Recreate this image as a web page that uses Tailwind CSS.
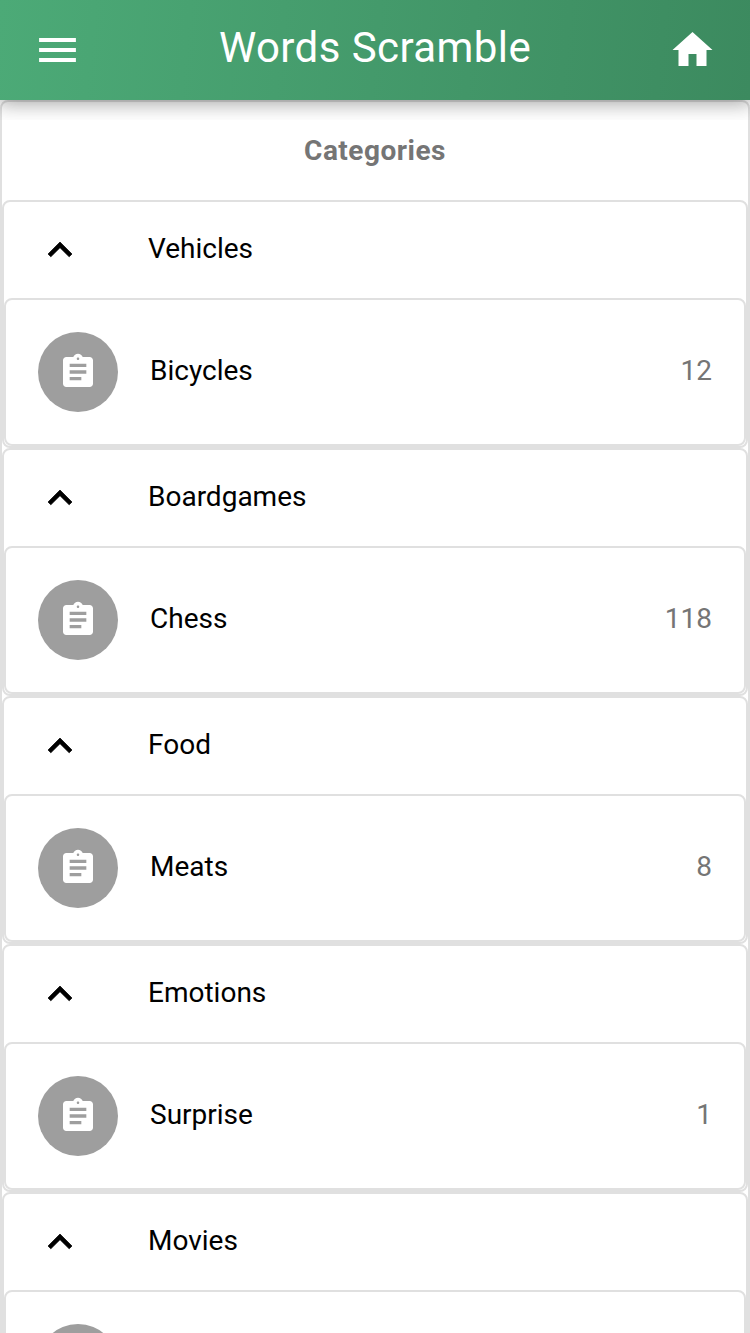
<!DOCTYPE html>
<html lang="en">
<head>
<meta charset="utf-8">
<title>Words Scramble</title>
<script src="https://cdn.jsdelivr.net/npm/@tailwindcss/browser@4"></script>
</head>
<body class="bg-white text-black text-[28px] leading-[40px] font-[Roboto,sans-serif] w-[750px] h-[1333px] overflow-hidden">
<svg class="hidden">
  <symbol id="up" viewBox="0 0 24 24"><path stroke="currentColor" stroke-width=".35" d="M12 8l-6 6 1.41 1.41L12 10.83l4.59 4.58L18 14z"/></symbol>
  <symbol id="task" viewBox="0 0 24 24"><path d="M19 3h-4.18C14.4 1.84 13.3 1 12 1s-2.4.84-2.82 2H5c-1.1 0-2 .9-2 2v14c0 1.1.9 2 2 2h14c1.1 0 2-.9 2-2V5c0-1.1-.9-2-2-2zm-7 .25c.41 0 .75.34.75.75s-.34.75-.75.75-.75-.34-.75-.75.34-.75.75-.75zM14 17H7v-2h7v2zm3-4H7v-2h10v2zm0-4H7V7h10v2z"/></symbol>
</svg>
<header class="relative z-10 h-[100px] flex items-center px-[33px] text-white bg-[linear-gradient(96deg,#4caa77,#3c8a5f)]">
  <svg class="w-[49px] h-[48px] fill-current" viewBox="0 0 24 24"><path d="M2.8 18h18.4v-2H2.8v2zm0-5h18.4v-2H2.8v2zm0-7v2h18.4V6H2.8z"/></svg>
  <h1 class="flex-1 text-center text-[42px] leading-[42px] tracking-[0.42px] pb-[4px]">Words Scramble</h1>
  <svg class="w-[49px] h-[48px] fill-current" viewBox="0 0 24 24"><path d="M10 20v-6h4v6h5v-8h3L12 3 2 12h3v8z"/></svg>
  <div class="absolute left-0 top-full w-full h-[20px] overflow-hidden pointer-events-none">
    <div class="h-[100px] -mt-[100px] shadow-[0_0_20px_4px_rgba(0,0,0,0.2),0_0_20px_rgba(0,0,0,0.24)]"></div>
  </div>
</header>
<div class="h-[1233px] overflow-hidden">
<main class="border-2 border-[#e0e0e0] rounded-[8px]">
  <h2 class="h-[98px] flex items-center justify-center font-bold text-[#757575] tracking-[0.5px]">Categories</h2>
  <div id="groups"></div>
</main>
</div>
<template id="group">
  <section class="border-2 border-[#e0e0e0] rounded-[8px] bg-white">
    <div class="h-[96px] flex items-center pl-[32px]">
      <svg class="w-[48px] h-[48px]"><use href="#up"/></svg>
      <span class="g pl-[64px] pb-[2px]"></span>
    </div>
    <div class="h-[148px] border-2 border-[#e0e0e0] rounded-[8px] flex items-center px-[32px]">
      <div class="w-[80px] h-[80px] rounded-full bg-[#9e9e9e] text-white flex items-center justify-center">
        <svg class="w-[40px] h-[40px] fill-current"><use href="#task"/></svg>
      </div>
      <span class="i flex-1 pl-[32px] pb-[2px]"></span>
      <span class="n text-[#757575] pb-[2px]"></span>
    </div>
  </section>
</template>
<script>
const root = document.getElementById('groups'), tpl = document.getElementById('group');
[['Vehicles','Bicycles','12'],['Boardgames','Chess','118'],['Food','Meats','8'],['Emotions','Surprise','1'],['Movies','','']].forEach(([g,i,n]) => {
  const c = tpl.content.cloneNode(true);
  c.querySelector('.g').textContent = g;
  c.querySelector('.i').textContent = i;
  c.querySelector('.n').textContent = n;
  root.appendChild(c);
});
</script>
</body>
</html>
